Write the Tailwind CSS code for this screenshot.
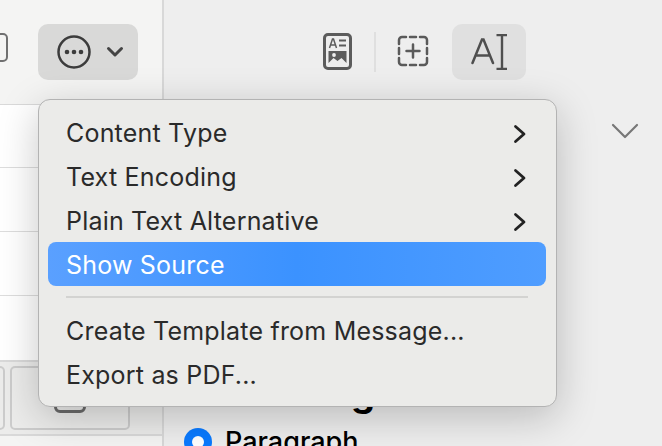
<!DOCTYPE html>
<html>
<head>
<meta charset="utf-8">
<script src="https://cdn.jsdelivr.net/npm/@tailwindcss/browser@4"></script>
</head>
<body class="m-0 overflow-hidden">
<div class="relative w-[662px] h-[446px] overflow-hidden bg-[#eeeeee] font-['Inter','Liberation_Sans',sans-serif] flex">
  <!-- left pane -->
  <div class="w-[164px] h-full shrink-0 flex flex-col border-r-2 border-[#d8d8d8] bg-[#f4f4f3]">
    <div class="h-[105px] shrink-0 relative border-b border-[#d9d9d9]">
      <div class="absolute left-[-16px] top-[33px] w-[24px] h-[29px] rounded-[5px] border-[2.500px] border-[#707070]"></div>
      <div class="absolute left-[38px] top-[24px] w-[100px] h-[56px] rounded-[10px] bg-[#d9d9d8] flex items-center pl-[19px] gap-[15px]">
        <svg width="34" height="34" viewBox="0 0 34 34" fill="none" class="shrink-0"><circle cx="17" cy="17" r="15.500" stroke="#3c3c3c" stroke-width="2.500"/><circle cx="10" cy="17" r="2.300" fill="#3c3c3c"/><circle cx="17" cy="17" r="2.300" fill="#3c3c3c"/><circle cx="24" cy="17" r="2.300" fill="#3c3c3c"/></svg>
        <svg width="18" height="12" viewBox="0 0 18 12" fill="none" class="shrink-0"><path d="M2.500 2.500 9 9l6.500-6.500" stroke="#444444" stroke-width="3" stroke-linecap="round" stroke-linejoin="round"/></svg>
      </div>
    </div>
    <div class="h-[255px] shrink-0 bg-white">
      <div class="h-[63px] border-b border-[#dddddd]"></div>
      <div class="h-[64px] border-b border-[#dddddd]"></div>
      <div class="h-[64px] border-b border-[#dddddd]"></div>
    </div>
    <div class="h-[76px] shrink-0 bg-[#ececeb] border-y-2 border-[#d9d9d9] flex gap-[5px] pt-[4px] pl-0">
      <div class="w-[5px] h-[64px] rounded-r-[5px] border-2 border-l-0 border-[#cccccc]"></div>
      <div class="w-[120px] h-[64px] rounded-[5px] border-2 border-[#cccccc] flex justify-center">
        <div class="w-[32px] h-[45px] rounded-[6px] border-[3px] border-[#6b6b6b]"></div>
      </div>
    </div>
    <div class="flex-1 bg-[#f4f4f3]"></div>
  </div>
  <!-- right pane -->
  <div class="flex-1 relative">
    <svg class="absolute left-[159px] top-[33px]" width="29" height="37" viewBox="0 0 29 37" fill="none">
      <rect x="1.500" y="1.500" width="26" height="34" rx="3.500" stroke="#5c5c5c" stroke-width="3"/>
      <path d="M6.500 15 9.500 6h1L13.500 15M7.800 12h4.500" stroke="#5c5c5c" stroke-width="1.500"/>
      <path d="M16 7.500h7M16 12.500h7" stroke="#5c5c5c" stroke-width="1.800"/>
      <path d="M5.500 18h18v12l-5-5-4 3-4-3-5 5z" fill="#5c5c5c"/>
      <circle cx="11" cy="22" r="1.900" fill="#eeeeee"/>
    </svg>
    <div class="absolute left-[210px] top-[32px] w-[2px] h-[40px] bg-[#dfdfdf]"></div>
    <svg class="absolute left-[233px] top-[35px]" width="32" height="32" viewBox="0 0 32 32" fill="none"><path d="M2 9V5a3 3 0 0 1 3-3h4M13 2h6M23 2h4a3 3 0 0 1 3 3v4M30 13v6M30 23v4a3 3 0 0 1-3 3h-4M19 30h-6M9 30H5a3 3 0 0 1-3-3v-4M2 19v-6" stroke="#5a5a5a" stroke-width="2.500" stroke-linecap="round"/><path d="M16 9.500v13M9.500 16h13" stroke="#5a5a5a" stroke-width="2.500" stroke-linecap="round"/></svg>
    <div class="absolute left-[288px] top-[24px] w-[74px] h-[56px] rounded-[10px] bg-[#e0e0e0] flex items-center justify-center">
      <svg width="36" height="36" viewBox="0 0 36 36" fill="none"><path d="M1.500 29 11 5.500h1.500L22 29M5 21.500h13.500" stroke="#4f4f4f" stroke-width="2.500" stroke-linecap="round"/><path d="M25.500 1h11M25.500 35h11M31 1v34" stroke="#4f4f4f" stroke-width="2.400"/></svg>
    </div>
    <svg class="absolute left-[447px] top-[122px]" width="28" height="18" viewBox="0 0 28 18" fill="none"><path d="M2 3l12 12L26 3" stroke="#777777" stroke-width="2.200" stroke-linecap="round" stroke-linejoin="round"/></svg>
    <span class="absolute left-[187px] top-[370px] text-[38px] leading-[44px] font-bold text-black">g</span>
    <div class="absolute left-[20px] top-[428px] flex items-center gap-[13px]">
      <div class="w-[28px] h-[28px] shrink-0 rounded-full bg-[#0a7aff] flex items-center justify-center"><div class="w-[12px] h-[12px] rounded-full bg-white"></div></div>
      <span class="text-[27px] leading-[28px] font-medium text-black whitespace-nowrap">Paragraph</span>
    </div>
  </div>
  <!-- menu -->
  <div class="absolute left-[38px] top-[99px] w-[519px] h-[308px] rounded-[12px] border border-[#b3b3b3] bg-[#ebebe9] shadow-[0_10px_40px_rgba(0,0,0,0.22)] pl-[9px] pr-[10px] pt-[10px] text-[25px] tracking-[0.2px] text-[#2a2a2a]">
    <div class="h-[44px] pt-[4px] flex items-center justify-between pl-[18px] pr-[19px]"><span>Content Type</span><svg width="14" height="20" viewBox="0 0 14 20" fill="none"><path d="M2.500 2.500 11 10l-8.500 7.500" stroke="#222222" stroke-width="2.800" stroke-linecap="round" stroke-linejoin="round"/></svg></div>
    <div class="h-[44px] pt-[4px] flex items-center justify-between pl-[18px] pr-[19px]"><span>Text Encoding</span><svg width="14" height="20" viewBox="0 0 14 20" fill="none"><path d="M2.500 2.500 11 10l-8.500 7.500" stroke="#222222" stroke-width="2.800" stroke-linecap="round" stroke-linejoin="round"/></svg></div>
    <div class="h-[44px] pt-[4px] flex items-center justify-between pl-[18px] pr-[19px]"><span>Plain Text Alternative</span><svg width="14" height="20" viewBox="0 0 14 20" fill="none"><path d="M2.500 2.500 11 10l-8.500 7.500" stroke="#222222" stroke-width="2.800" stroke-linecap="round" stroke-linejoin="round"/></svg></div>
    <div class="h-[44px] pt-[4px] flex items-center pl-[18px] rounded-[8px] bg-[linear-gradient(90deg,#5aa0ff,#3b92ff_50%,#4f9dff)] text-white"><span>Show Source</span></div>
    <div class="h-[22px] mx-[18px] flex items-center"><div class="w-full h-[2px] bg-[#d3d3d1]"></div></div>
    <div class="h-[44px] pt-[4px] flex items-center pl-[18px]"><span>Create Template from Message...</span></div>
    <div class="h-[44px] pt-[4px] flex items-center pl-[18px]"><span>Export as PDF...</span></div>
  </div>
</div>
</body>
</html>
